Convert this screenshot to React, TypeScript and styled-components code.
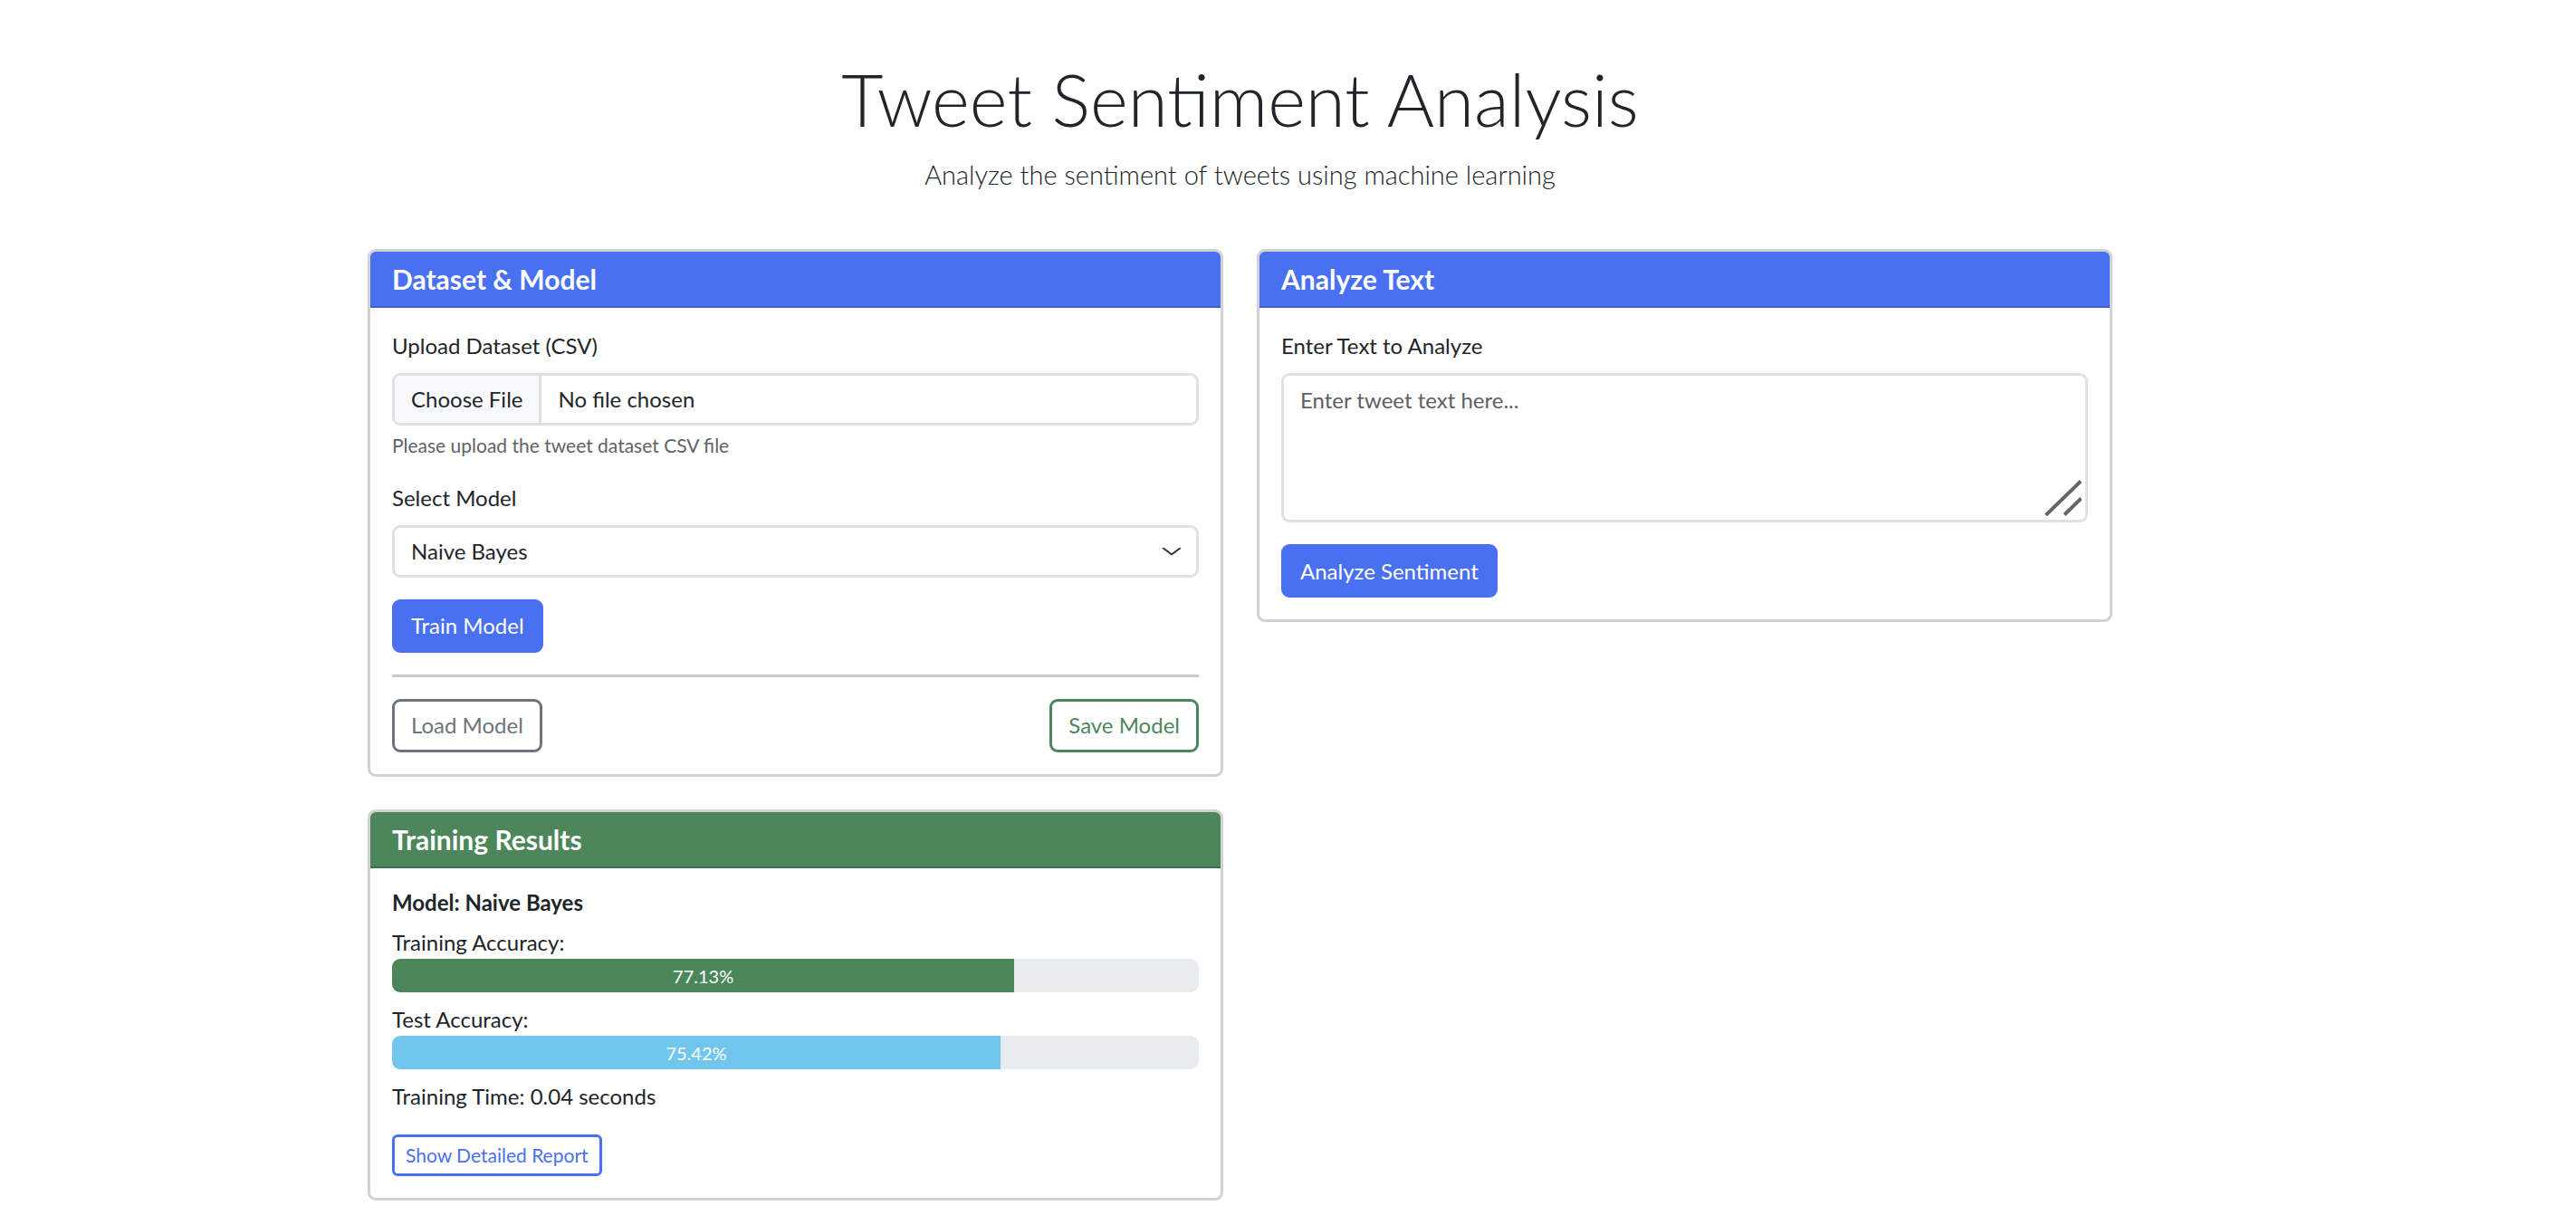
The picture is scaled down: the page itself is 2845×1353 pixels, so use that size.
import React from "react";
import styled, { createGlobalStyle, css } from "styled-components";

const GlobalStyle = createGlobalStyle`
  *, *::before, *::after { box-sizing: border-box; }
  html, body { margin: 0; padding: 0; background: #ffffff; }
  body {
    font-family: Lato, "Open Sans", sans-serif;
    font-size: 24px;
    line-height: 1.5;
    color: #212529;
  }
`;

const BLUE = "#4a70f2";
const GREEN = "#4b875b";
const INFO = "#70c6ec";
const GRAY = "#6c757d";
const FIELD_BORDER = "#dee2e6";

const Page = styled.div`
  width: 2739px;
`;

const Container = styled.main`
  width: 1927px;
  margin: 0 auto;
  padding-top: 61px;
  padding-bottom: 24px;
`;

const Header = styled.header`
  text-align: center;
  padding-bottom: 60px;
`;

const Title = styled.h1`
  margin: 0 0 13px;
  font-size: 80px;
  font-weight: 300;
  line-height: 96px;
  color: #212529;
`;

const Lead = styled.p`
  margin: 0;
  font-size: 29px;
  font-weight: 300;
  line-height: 45px;
  color: #212529;
`;

const Row = styled.div`
  display: grid;
  grid-template-columns: 945px 945px;
  column-gap: 37px;
  align-items: start;
`;

const Column = styled.div`
  display: flex;
  flex-direction: column;
  gap: 36px;
`;

const Card = styled.section`
  background: #fff;
  border: 3px solid rgba(0, 0, 0, 0.175);
  border-radius: 9px;
  overflow: hidden;
`;

const CardHeader = styled.div<{ $variant: "primary" | "success" }>`
  padding: 12px 24px;
  background: ${(p) => (p.$variant === "success" ? GREEN : BLUE)};
  border-bottom: 2px solid rgba(0, 0, 0, 0.175);
  color: #fff;
`;

const CardTitle = styled.h5`
  margin: 0;
  font-size: 30px;
  font-weight: 700;
  line-height: 36px;
`;

const CardBody = styled.div`
  padding: 24px;
`;

const Field = styled.div`
  margin-bottom: 24px;
`;

const Label = styled.label`
  display: inline-block;
  margin-bottom: 12px;
`;

const FileInput = styled.label`
  display: flex;
  align-items: center;
  height: 58px;
  border: 3px solid ${FIELD_BORDER};
  border-radius: 9px;
  overflow: hidden;
  background: #fff;
  cursor: pointer;
  input { display: none; }
`;

const FileButton = styled.span`
  display: flex;
  align-items: center;
  height: 100%;
  padding: 0 18px;
  background: #f8f9fa;
  border-right: 3px solid ${FIELD_BORDER};
  color: #212529;
`;

const FileName = styled.span`
  padding-left: 18px;
  color: #212529;
`;

const HelpText = styled.div`
  margin-top: 6px;
  font-size: 21px;
  line-height: 1.5;
  color: #5f6367;
`;

const SelectWrap = styled.div`
  position: relative;
`;

const Select = styled.select`
  display: block;
  width: 100%;
  height: 58px;
  padding: 8px 54px 8px 18px;
  font: inherit;
  color: #212529;
  background: #fff;
  border: 3px solid ${FIELD_BORDER};
  border-radius: 9px;
  appearance: none;
  outline: none;
`;

const Chevron = styled.svg`
  position: absolute;
  right: 18px;
  top: 50%;
  width: 24px;
  height: 18px;
  margin-top: -9px;
  pointer-events: none;
`;

const buttonVariants = {
  primary: css`
    background: ${BLUE};
    border-color: ${BLUE};
    color: #fff;
  `,
  outlineSecondary: css`
    background: #fff;
    border-color: ${GRAY};
    color: ${GRAY};
  `,
  outlineSuccess: css`
    background: #fff;
    border-color: ${GREEN};
    color: ${GREEN};
  `,
  outlinePrimary: css`
    background: #fff;
    border-color: ${BLUE};
    color: ${BLUE};
  `,
};

const Button = styled.button<{
  $variant: keyof typeof buttonVariants;
  $small?: boolean;
}>`
  display: inline-block;
  font-family: inherit;
  font-weight: 400;
  border: 3px solid transparent;
  cursor: pointer;
  ${(p) =>
    p.$small
      ? css`
          padding: 4px 12px;
          font-size: 21px;
          line-height: 1.5;
          border-radius: 6px;
        `
      : css`
          padding: 8.5px 18px;
          font-size: 24px;
          line-height: 1.5;
          border-radius: 9px;
        `}
  ${(p) => buttonVariants[p.$variant]}
`;

const Divider = styled.hr`
  margin: 24px 0;
  height: 3px;
  border: 0;
  background: #c9c9c9;
`;

const ButtonRow = styled.div`
  display: flex;
  justify-content: space-between;
  align-items: center;
`;

const TextAreaWrap = styled.div`
  position: relative;
`;

const TextArea = styled.textarea`
  display: block;
  width: 100%;
  height: 165px;
  padding: 9px 18px;
  font: inherit;
  color: #212529;
  border: 3px solid ${FIELD_BORDER};
  border-radius: 9px;
  resize: none;
  outline: none;
  &::placeholder {
    color: #5d6064;
  }
`;

const ResizeGrip = styled.svg`
  position: absolute;
  right: 7px;
  bottom: 7px;
  width: 41px;
  height: 40px;
  pointer-events: none;
`;

const ModelName = styled.h6`
  margin: 0 0 12px;
  font-size: 24px;
  font-weight: 700;
  line-height: 1.2;
`;

const MetricLabel = styled.div`
  line-height: 1.5;
`;

const Progress = styled.div`
  display: flex;
  height: 37px;
  margin-bottom: 12px;
  background: #e9ecef;
  border-radius: 9px;
  overflow: hidden;
`;

const ProgressBar = styled.div<{ $color: string }>`
  display: flex;
  align-items: center;
  justify-content: center;
  background: ${(p) => p.$color};
  color: #fff;
  font-size: 20px;
  line-height: 1;
  white-space: nowrap;
`;

const MetaText = styled.p`
  margin: 0 0 24px;
`;

const metrics = [
  { label: "Training Accuracy:", value: 77.13, color: GREEN },
  { label: "Test Accuracy:", value: 75.42, color: INFO },
];

export default function App() {
  return (
    <Page>
      <GlobalStyle />
      <Container>
        <Header>
          <Title>Tweet Sentiment Analysis</Title>
          <Lead>Analyze the sentiment of tweets using machine learning</Lead>
        </Header>

        <Row>
          <Column>
            <Card>
              <CardHeader $variant="primary">
                <CardTitle>Dataset &amp; Model</CardTitle>
              </CardHeader>
              <CardBody>
                <Field>
                  <Label>Upload Dataset (CSV)</Label>
                  <FileInput>
                    <input type="file" accept=".csv" />
                    <FileButton>Choose File</FileButton>
                    <FileName>No file chosen</FileName>
                  </FileInput>
                  <HelpText>Please upload the tweet dataset CSV file</HelpText>
                </Field>
                <Field>
                  <Label>Select Model</Label>
                  <SelectWrap>
                    <Select defaultValue="nb">
                      <option value="nb">Naive Bayes</option>
                      <option value="lr">Logistic Regression</option>
                      <option value="svm">SVM</option>
                    </Select>
                    <Chevron viewBox="0 0 16 16" preserveAspectRatio="none">
                      <path
                        d="m2 5 6 6 6-6"
                        fill="none"
                        stroke="#343a40"
                        strokeWidth="1.6"
                        strokeLinecap="round"
                        strokeLinejoin="round"
                      />
                    </Chevron>
                  </SelectWrap>
                </Field>
                <Button $variant="primary">Train Model</Button>
                <Divider />
                <ButtonRow>
                  <Button $variant="outlineSecondary">Load Model</Button>
                  <Button $variant="outlineSuccess">Save Model</Button>
                </ButtonRow>
              </CardBody>
            </Card>

            <Card>
              <CardHeader $variant="success">
                <CardTitle>Training Results</CardTitle>
              </CardHeader>
              <CardBody>
                <ModelName>Model: Naive Bayes</ModelName>
                {metrics.map((m) => (
                  <div key={m.label}>
                    <MetricLabel>{m.label}</MetricLabel>
                    <Progress>
                      <ProgressBar $color={m.color} style={{ width: `${m.value}%` }}>
                        {m.value.toFixed(2)}%
                      </ProgressBar>
                    </Progress>
                  </div>
                ))}
                <MetaText>Training Time: 0.04 seconds</MetaText>
                <Button $variant="outlinePrimary" $small>
                  Show Detailed Report
                </Button>
              </CardBody>
            </Card>
          </Column>

          <Column>
            <Card>
              <CardHeader $variant="primary">
                <CardTitle>Analyze Text</CardTitle>
              </CardHeader>
              <CardBody>
                <Field>
                  <Label>Enter Text to Analyze</Label>
                  <TextAreaWrap>
                    <TextArea placeholder="Enter tweet text here..." />
                    <ResizeGrip viewBox="0 0 41 40">
                      <line x1="1.5" y1="39" x2="40" y2="1.5" stroke="#666" strokeWidth="4" />
                      <line x1="22" y1="38.5" x2="40.5" y2="20.5" stroke="#666" strokeWidth="4" />
                    </ResizeGrip>
                  </TextAreaWrap>
                </Field>
                <Button $variant="primary">Analyze Sentiment</Button>
              </CardBody>
            </Card>
          </Column>
        </Row>
      </Container>
    </Page>
  );
}
